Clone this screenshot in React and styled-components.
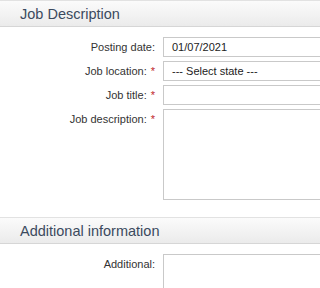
import React from 'react';
import styled, { createGlobalStyle } from 'styled-components';

const GlobalStyle = createGlobalStyle`
  html, body {
    margin: 0;
    padding: 0;
    background: #fff;
    overflow: hidden;
  }
  body {
    font-family: "Liberation Sans", Arial, sans-serif;
  }
`;

const Page = styled.div`
  width: 100%;
  height: 288px;
  overflow: hidden;
`;

const SectionHeader = styled.h2`
  margin: 0;
  height: 27px;
  box-sizing: border-box;
  padding-left: 20px;
  display: flex;
  align-items: center;
  font-size: 14.5px;
  font-weight: normal;
  color: #3b4a5e;
  background: linear-gradient(#fbfbfb, #ebebeb);
  border-top: 1px solid #e2e2e2;
  border-bottom: 1px solid #d6d6d6;
`;

const Form = styled.div`
  display: flex;
  flex-direction: column;
  gap: 4px;
  padding: ${p => p.$pad || '10px 0 17px'};
`;

const Row = styled.div`
  display: grid;
  grid-template-columns: 155px 1fr;
  column-gap: 8px;
  align-items: ${p => (p.$top ? 'start' : 'center')};
`;

const Label = styled.label`
  text-align: right;
  font-size: 11px;
  color: #333;
  padding-top: ${p => (p.$top ? '4px' : '0')};
  white-space: nowrap;
`;

const Req = styled.span`
  color: #c0262b;
  margin-left: 4px;
`;

const Field = styled.div`
  width: calc(100% + 40px);
  height: ${p => p.$h || 20}px;
  box-sizing: border-box;
  border: 1px solid #c9c9c9;
  background: #fff;
  font-size: 11px;
  color: #222;
  padding: 0 8px;
  display: flex;
  align-items: center;
`;

export default function App() {
  return (
    <Page>
      <GlobalStyle />
      <SectionHeader>Job Description</SectionHeader>
      <Form>
        <Row>
          <Label>Posting date:</Label>
          <Field>01/07/2021</Field>
        </Row>
        <Row>
          <Label>Job location:<Req>*</Req></Label>
          <Field>--- Select state ---</Field>
        </Row>
        <Row>
          <Label>Job title:<Req>*</Req></Label>
          <Field />
        </Row>
        <Row $top>
          <Label $top>Job description:<Req>*</Req></Label>
          <Field $h={91} />
        </Row>
      </Form>
      <SectionHeader>Additional information</SectionHeader>
      <Form $pad="10px 0 0">
        <Row $top>
          <Label $top>Additional:</Label>
          <Field $h={60} />
        </Row>
      </Form>
    </Page>
  );
}
